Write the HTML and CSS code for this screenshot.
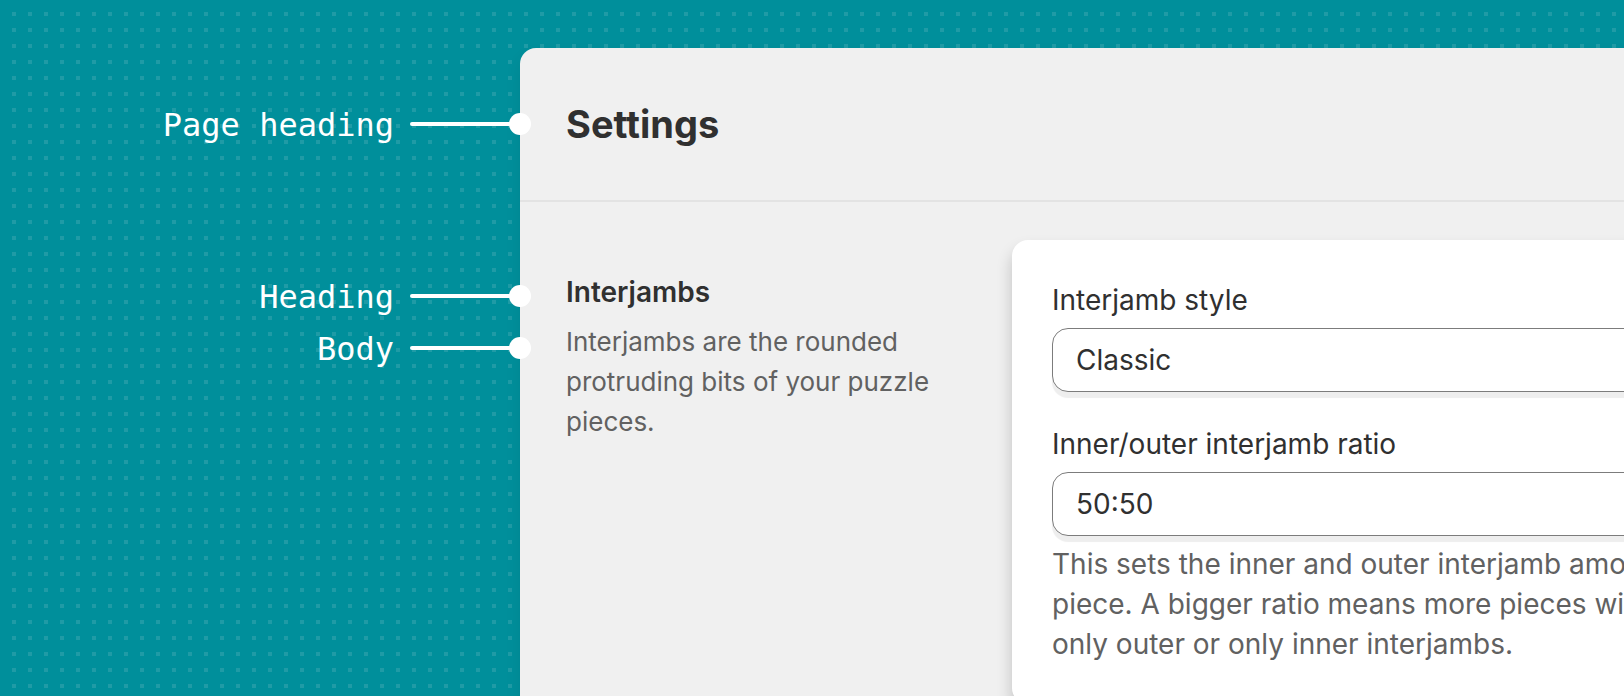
FILE: index.html
```html
<!DOCTYPE html>
<html lang="en">
<head>
	<meta charset="UTF-8">
	<meta name="viewport" content="width=device-width, initial-scale=1.0">
	<title>Settings</title>
	<link rel="stylesheet" href="styles.css">
</head>
<body>
	<div class="canvas">
		<div class="callouts">
			<div class="callout callout-page"><span>Page heading</span><i class="pin"></i></div>
			<div class="callout callout-heading"><span>Heading</span><i class="pin"></i></div>
			<div class="callout"><span>Body</span><i class="pin"></i></div>
		</div>
		<main class="panel">
			<header class="panel-header">
				<h1>Settings</h1>
			</header>
			<section class="section">
				<div class="intro">
					<h2>Interjambs</h2>
					<p>Interjambs are the rounded protruding bits of your puzzle pieces.</p>
				</div>
				<form class="card">
					<div class="field">
						<label for="style">Interjamb style</label>
						<select id="style" name="style">
							<option>Classic</option>
						</select>
					</div>
					<div class="field">
						<label for="ratio">Inner/outer interjamb ratio</label>
						<input type="text" id="ratio" name="ratio" value="50:50" aria-describedby="ratio-help">
						<p class="help" id="ratio-help">This sets the inner and outer interjamb amount per<br>piece. A bigger ratio means more pieces will have<br>only outer or only inner interjambs.</p>
					</div>
				</form>
			</section>
		</main>
	</div>
</body>
</html>
```
FILE: styles.css
```css
*{
	margin: 0;
	padding: 0;
	box-sizing: border-box;
}
body{
	font-family: Inter, "Liberation Sans", sans-serif;
	color: #303030;
	overflow: hidden;
}
.canvas{
	display: flex;
	min-height: 100vh;
	padding-top: 48px;
	background-color: #008f9b;
	/* 4px squares on a 16px grid */
	background-image: conic-gradient(from 270deg at 4px 4px, #1f9ba6 90deg, transparent 0);
	background-size: 16px 16px;
	background-position: 12px 12px;
}

/* callouts */
.callouts{
	flex: 0 0 520px;
	padding-top: 56px;
	z-index: 1;
}
.callout{
	display: flex;
	align-items: center;
	justify-content: flex-end;
	gap: 16px;
	height: 40px;
	margin: 0 -11px 12px 0;
	font-family: "DejaVu Sans Mono", monospace;
	font-size: 32px;
	line-height: 40px;
	color: #fff;
}
.callout span{
	padding-top: 2px;
}
.callout-page{
	margin-bottom: 132px;
}
.pin{
	display: flex;
	align-items: center;
	width: 121px;
}
.pin::before{
	content: "";
	flex: 1;
	height: 4px;
	margin-right: -2px;
	border-radius: 2px;
	background: #fff;
}
.pin::after{
	content: "";
	width: 22px;
	height: 22px;
	border-radius: 50%;
	background: #fff;
}

/* settings panel */
.panel{
	flex: 1 0 1400px;
	border-radius: 16px 0 0 0;
	background: #f0f0f0;
	box-shadow: 0 8px 16px rgba(0,0,0,0.08);
}
.panel-header{
	padding: 52px 46px;
	border-bottom: 2px solid #e3e3e3;
}
h1{
	font-size: 38px;
	line-height: 48px;
	font-weight: 700;
}
.section{
	display: flex;
	padding: 38px 46px;
}
.intro{
	flex: 0 0 446px;
	padding: 32px 60px 0 0;
}
h2{
	margin-bottom: 10px;
	font-size: 28px;
	line-height: 40px;
	font-weight: 600;
}
.intro p{
	font-size: 26px;
	line-height: 40px;
	color: #616161;
}
.card{
	flex: 1;
	padding: 40px;
	border-radius: 16px;
	background: #fff;
	box-shadow: 0 10px 16px rgba(0,0,0,0.2);
	font-size: 28px;
	line-height: 40px;
}
.field + .field{
	margin-top: 32px;
}
.field label{
	display: block;
	margin-bottom: 8px;
}
.field select,
.field input{
	display: block;
	width: 100%;
	height: 64px;
	padding: 0 23px;
	border: 1px solid #7c7c7c;
	border-radius: 16px;
	background: #fff;
	box-shadow: 0 6px 1px #eee;
	font: inherit;
	color: inherit;
	appearance: none;
}
.help{
	margin-top: 8px;
	color: #616161;
}
```
